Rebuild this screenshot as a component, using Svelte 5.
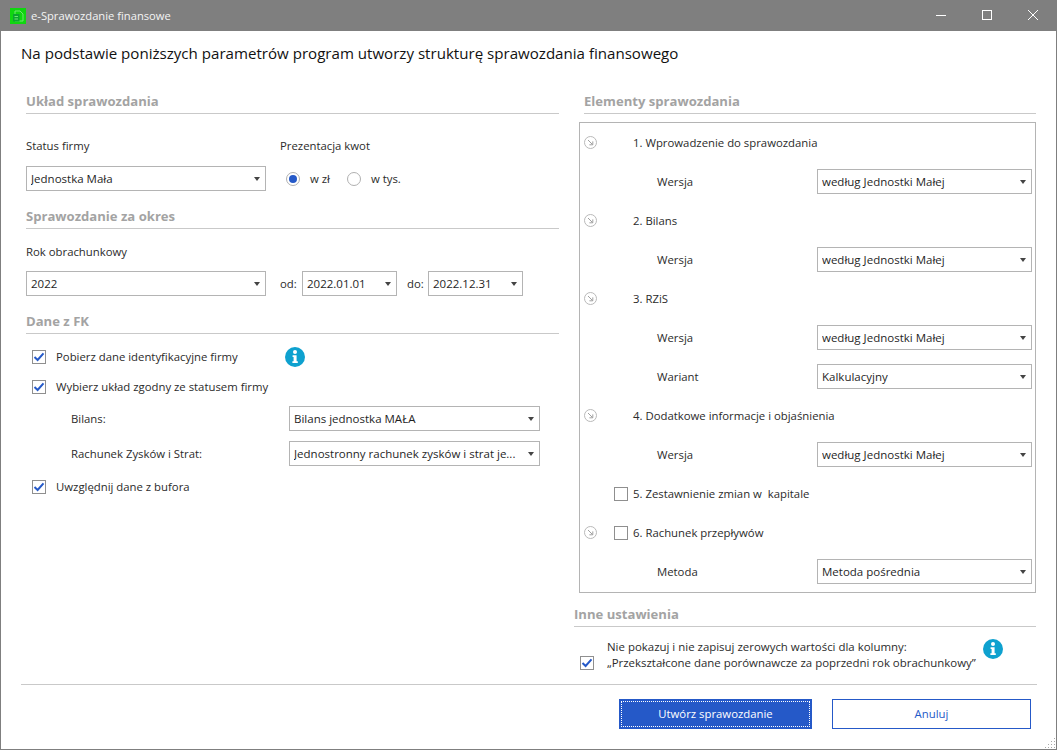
<script>
  let pokazuj = $state(true);

  const elementy = [
    { icon: true, name: '1. Wprowadzenie do sprawozdania', subs: [['Wersja', 'według Jednostki Małej']] },
    { icon: true, name: '2. Bilans', subs: [['Wersja', 'według Jednostki Małej']] },
    {
      icon: true,
      name: '3. RZiS',
      subs: [
        ['Wersja', 'według Jednostki Małej'],
        ['Wariant', 'Kalkulacyjny'],
      ],
    },
    { icon: true, name: '4. Dodatkowe informacje i objaśnienia', subs: [['Wersja', 'według Jednostki Małej']] },
    { check: true, name: '5. Zestawnienie zmian w\u00a0 kapitale', subs: [] },
    { icon: true, check: true, name: '6. Rachunek przepływów', subs: [['Metoda', 'Metoda pośrednia']] },
  ];
</script>

{#snippet select(value, cls)}
  <div class="select {cls}">
    <span class="value">{value}</span>
    <span class="arrow"></span>
  </div>
{/snippet}

{#snippet checkbox(checked)}
  <span class="box">
    {#if checked}
      <svg viewBox="0 0 14 14" width="14" height="14"><path d="M2.5 7 L5.6 10 L11.5 3.4" fill="none" stroke="#2559c8" stroke-width="2" /></svg>
    {/if}
  </span>
{/snippet}

{#snippet info()}
  <svg class="info" viewBox="0 0 20 20" width="20" height="20">
    <circle cx="10" cy="10" r="10" fill="#0ea1cf" />
    <circle cx="10" cy="5" r="2" fill="#fff" />
    <path d="M7.6 8.2 H11.6 V14.2 H12.8 V16 H7.4 V14.2 H8.6 V10 H7.6 Z" fill="#fff" />
  </svg>
{/snippet}

<div class="window">
  <div class="titlebar">
    <svg class="appicon" viewBox="0 0 16 16" width="16" height="16">
      <rect width="16" height="16" fill="#0fd60f" />
      <path d="M5 3 H10 L13 6 V13 H5 Z" fill="none" stroke="#6fe66f" stroke-width="1" />
      <rect x="3" y="6" width="6.5" height="7.5" fill="#0ba52f" />
      <path d="M4.5 8.5 H8 M4.5 11 H8" stroke="#6fe66f" stroke-width="1" />
    </svg>
    <span class="apptitle">e-Sprawozdanie finansowe</span>
    <div class="winbtns">
      <svg viewBox="0 0 46 31" width="46" height="31"><path d="M18 15.5 H28" stroke="#fff" stroke-width="1" /></svg>
      <svg viewBox="0 0 46 31" width="46" height="31"><rect x="18.5" y="10.5" width="9" height="9" fill="none" stroke="#fff" stroke-width="1" /></svg>
      <svg viewBox="0 0 46 31" width="46" height="31"><path d="M18 10 L28 20 M28 10 L18 20" stroke="#fff" stroke-width="1" /></svg>
    </div>
  </div>

  <h1>Na podstawie poniższych parametrów program utworzy strukturę sprawozdania finansowego</h1>

  <div class="columns">
    <section class="left">
      <h2>Układ sprawozdania</h2>
      <div class="status">
        <div class="field">
          <div class="label">Status firmy</div>
          {@render select('Jednostka Mała', 'w240')}
        </div>
        <div class="field">
          <div class="label">Prezentacja kwot</div>
          <div class="radios">
            <span class="radio on"></span><span class="radiotext">w zł</span>
            <span class="radio"></span><span class="radiotext">w tys.</span>
          </div>
        </div>
      </div>

      <h2 class="next">Sprawozdanie za okres</h2>
      <div class="label year">Rok obrachunkowy</div>
      <div class="period">
        {@render select('2022', 'w240')}
        <span class="od">od:</span>
        {@render select('2022.01.01', 'w95')}
        <span class="do">do:</span>
        {@render select('2022.12.31', 'w95')}
      </div>

      <h2 class="next">Dane z FK</h2>
      <div class="check first">
        {@render checkbox(true)}
        <span>Pobierz dane identyfikacyjne firmy</span>
        <span class="infoslot">{@render info()}</span>
      </div>
      <div class="check second">
        {@render checkbox(true)}
        <span>Wybierz układ zgodny ze statusem firmy</span>
      </div>
      <div class="uklad bilans">
        <span class="ukladlabel">Bilans:</span>
        {@render select('Bilans jednostka MAŁA', 'w251')}
      </div>
      <div class="uklad">
        <span class="ukladlabel">Rachunek Zysków i Strat:</span>
        {@render select('Jednostronny rachunek zysków i strat je...', 'w251')}
      </div>
      <div class="check bufor">
        {@render checkbox(true)}
        <span>Uwzględnij dane z bufora</span>
      </div>
    </section>

    <section class="right">
      <h2 class="elementy">Elementy sprawozdania</h2>
      <div class="panel">
        {#each elementy as el}
          <div class="row">
            <span class="slot-icon">
              {#if el.icon}
                <svg viewBox="0 0 13 13" width="13" height="13">
                  <circle cx="6.5" cy="6.5" r="6" fill="none" stroke="#b9b9b9" />
                  <path d="M4 4 L8.6 8.6 M8.8 5.4 V8.8 H5.4" fill="none" stroke="#a0a0a0" />
                </svg>
              {/if}
            </span>
            <span class="slot-check">
              {#if el.check}{@render checkbox(false)}{/if}
            </span>
            <span>{el.name}</span>
          </div>
          {#each el.subs as [label, value]}
            <div class="row sub">
              <span class="sublabel">{label}</span>
              {@render select(value, 'w215')}
            </div>
          {/each}
        {/each}
      </div>

      <div class="inne">
        <h2>Inne ustawienia</h2>
        <div class="zerowe">
          <button class="plain" onclick={() => (pokazuj = !pokazuj)}>{@render checkbox(pokazuj)}</button>
          <div class="zerowetext">
            <div>Nie pokazuj i nie zapisuj zerowych wartości dla kolumny:</div>
            <div>„Przekształcone dane porównawcze za poprzedni rok obrachunkowy”</div>
          </div>
          <span class="infoslot2">{@render info()}</span>
        </div>
      </div>
    </section>
  </div>

  <div class="footer">
    <button class="primary"><span>Utwórz sprawozdanie</span></button>
    <button class="secondary">Anuluj</button>
  </div>
  <svg class="grip" viewBox="0 0 12 12" width="12" height="12">
    <path d="M10 1h1v1h-1z M7 4h1v1H7z M10 4h1v1h-1z M4 7h1v1H4z M7 7h1v1H7z M10 7h1v1h-1z M1 10h1v1H1z M4 10h1v1H4z M7 10h1v1H7z M10 10h1v1h-1z" fill="#a8a8a8" />
  </svg>
</div>

<style>
  :global(body) {
    margin: 0;
    background: #fff;
  }
  .window {
    position: relative;
    box-sizing: border-box;
    width: 1057px;
    height: 750px;
    border: 1px solid #7f7f7f;
    border-top: none;
    background: #fff;
    overflow: hidden;
    font-family: 'Open Sans', 'Noto Sans', sans-serif;
    font-size: 11.35px;
    color: #2b2b2b;
    line-height: 20px;
  }
  .titlebar {
    height: 31px;
    margin: 0 -1px;
    background: #7f7f7f;
    display: flex;
    align-items: center;
    color: #fff;
    padding-left: 10px;
    padding-right: 1px;
  }
  .appicon {
    flex: none;
  }
  .apptitle {
    margin-left: 5px;
    font-size: 11.2px;
    color: #f4f4f4;
  }
  .winbtns {
    margin-left: auto;
    display: flex;
  }
  .winbtns svg {
    display: block;
  }
  h1 {
    margin: 0;
    height: 44px;
    line-height: 44px;
    padding-left: 20px;
    font-size: 15.1px;
    font-weight: 400;
    color: #111;
  }
  .columns {
    margin-top: 15px;
    display: flex;
  }
  .left {
    box-sizing: border-box;
    width: 558px;
    padding-left: 25px;
  }
  .right {
    width: 457px;
    margin-left: 20px;
  }
  h2 {
    margin: 0;
    height: 23px;
    line-height: 22px;
    border-bottom: 1px solid #c9c9c9;
    font-size: 13.1px;
    font-weight: 700;
    color: #a3a3a3;
  }
  h2.next {
    margin-top: 14px;
  }
  h2.elementy {
    margin-left: 5px;
  }
  .label {
    height: 20px;
  }
  .status {
    display: flex;
    margin-top: 22px;
    gap: 14px;
  }
  .field .label {
    margin-bottom: 10px;
  }
  .select {
    box-sizing: border-box;
    flex: none;
    height: 25px;
    border: 1px solid #b4b4b4;
    background: #fff;
    display: flex;
    align-items: center;
    padding: 0 4px;
    font-size: 11.5px;
    color: #1f1f1f;
  }
  .w240 {
    width: 240px;
  }
  .w95 {
    width: 95px;
  }
  .w251 {
    width: 251px;
  }
  .w215 {
    width: 215px;
  }
  .value {
    flex: 1;
    overflow: hidden;
    white-space: nowrap;
  }
  .arrow {
    flex: none;
    margin-right: 1px;
    width: 0;
    height: 0;
    border-left: 3.5px solid transparent;
    border-right: 3.5px solid transparent;
    border-top: 4px solid #444;
  }
  .radios {
    height: 25px;
    display: flex;
    align-items: center;
    padding-left: 6px;
  }
  .radio {
    box-sizing: border-box;
    width: 14px;
    height: 14px;
    border-radius: 50%;
    border: 1px solid #b0b0b0;
    display: flex;
    align-items: center;
    justify-content: center;
  }
  .radio.on::after {
    content: '';
    width: 8px;
    height: 8px;
    border-radius: 50%;
    background: #2559c8;
  }
  .radiotext {
    margin-left: 10px;
    margin-right: 16px;
    min-width: 21px;
  }
  .year {
    margin-top: 13px;
  }
  .period {
    margin-top: 9px;
    display: flex;
    align-items: center;
  }
  .od {
    margin-left: 14px;
    width: 22px;
  }
  .do {
    margin-left: 10px;
    width: 21px;
  }
  .check {
    display: flex;
    align-items: center;
    height: 20px;
    padding-left: 6px;
  }
  .check.first {
    margin-top: 13px;
    position: relative;
  }
  .check.second {
    margin-top: 10px;
  }
  .check.bufor {
    margin-top: 11px;
  }
  .box {
    box-sizing: border-box;
    flex: none;
    width: 14px;
    height: 14px;
    border: 1px solid #8f8f8f;
    background: #fff;
    display: block;
    position: relative;
  }
  .box svg {
    position: absolute;
    left: -1px;
    top: -1px;
  }
  .check .box {
    margin-right: 10px;
  }
  .infoslot {
    margin-left: 47px;
    display: flex;
  }
  .info {
    display: block;
  }
  .uklad {
    display: flex;
    align-items: center;
    margin-top: 10px;
    padding-left: 45px;
  }
  .uklad.bilans {
    margin-top: 9px;
  }
  .ukladlabel {
    width: 218px;
  }
  .panel {
    margin-top: 8px;
    border: 1px solid #b4b4b4;
    padding-bottom: 1px;
  }
  .row {
    height: 39px;
    display: flex;
    align-items: center;
  }
  .row.sub {
    padding-left: 77px;
  }
  .sublabel {
    width: 160px;
  }
  .slot-icon {
    box-sizing: border-box;
    width: 34px;
    padding-left: 4px;
    display: flex;
  }
  .slot-check {
    width: 19px;
    display: flex;
  }
  .inne {
    margin-top: 10px;
    margin-left: -5px;
  }
  .zerowe {
    position: relative;
    display: flex;
    padding-top: 12px;
    height: 32px;
  }
  .plain {
    flex: none;
    align-self: flex-end;
    margin: 0 0 1px 6px;
    padding: 0;
    border: none;
    background: none;
    display: block;
    cursor: pointer;
  }
  .zerowetext {
    margin-left: 13px;
    line-height: 16px;
    font-size: 11.45px;
  }
  .infoslot2 {
    margin-left: 7px;
  }
  .footer {
    margin: 13px 19px 0 20px;
    border-top: 1px solid #c9c9c9;
    padding-top: 14px;
    display: flex;
    justify-content: flex-end;
    gap: 20px;
    padding-right: 6px;
  }
  .footer button {
    box-sizing: border-box;
    height: 30px;
    font: inherit;
    padding: 0;
  }
  .primary {
    width: 193px;
    background: #2559c8;
    border: 2px solid #2559c8;
    color: #fff;
    cursor: pointer;
  }
  .primary span {
    display: flex;
    height: 100%;
    box-sizing: border-box;
    align-items: center;
    justify-content: center;
    border: 1px dotted #fff;
  }
  .secondary {
    width: 199px;
    background: #fff;
    border: 1px solid #2559c8;
    color: #2559c8;
    cursor: pointer;
  }
  .grip {
    position: absolute;
    right: 0;
    bottom: 0;
  }
</style>
